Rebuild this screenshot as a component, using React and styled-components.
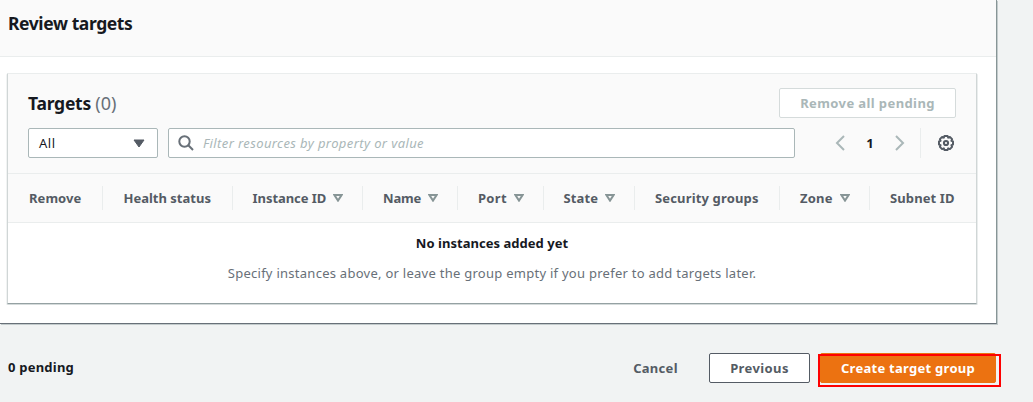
import React from "react";
import styled, { createGlobalStyle } from "styled-components";

const GlobalStyle = createGlobalStyle`
  * { box-sizing: border-box; }
  body {
    margin: 0;
    background: #f1f3f3;
    color: #16191f;
    font-family: "Noto Sans", "Open Sans", sans-serif;
    font-size: 13px;
    line-height: 20px;
    overflow: hidden;
  }
`;

const Page = styled.main`
  width: 1033px;
  height: 402px;
  display: flex;
  flex-direction: column;
`;

const Label = styled.span`
  white-space: nowrap;
  letter-spacing: ${(p) => p.$spacing || 0}px;
`;

const Container = styled.section`
  width: 997px;
  height: 324px;
  background: #fff;
  border-right: 1px solid #879596;
  border-bottom: 1px solid #687078;
  box-shadow: 1px 1px 0 #c3cbcc;
`;

const ContainerHeader = styled.header`
  height: 57px;
  padding: 11px 8px 0;
  background: #fafafa;
  border-bottom: 1px solid #eaeded;
`;

const Heading = styled.h2`
  margin: 0;
  font-size: 17.5px;
  font-weight: 700;
  line-height: 24px;
`;

const Count = styled.span`
  color: #687078;
  font-size: 18px;
  font-weight: 400;
  letter-spacing: 0;
`;

const Card = styled.section`
  width: 970px;
  height: 231px;
  margin: 16px 0 0 7px;
  background: #fff;
  border: 1px solid #d0d6d6;
  border-top-color: #eaeded;
  border-bottom-color: #95a1a3;
  border-radius: 1px;
  box-shadow: 0 1px 0 #d5dbdb, 1px 1px 0 #eaeded, -1px 1px 0 #f1f3f3;
`;

const CardHeader = styled.header`
  height: 100px;
  padding: 14px 20px 0;
  background: #fafafa;
  border-bottom: 1px solid #eaeded;
`;

const TitleRow = styled.div`
  display: flex;
  justify-content: space-between;
  align-items: center;
  height: 30px;
`;

const ToolRow = styled.div`
  display: flex;
  align-items: center;
  height: 30px;
  margin-top: 10px;
`;

const variants = {
  normal: { bg: "#fff", border: "#545b64", color: "#545b64" },
  disabled: { bg: "#fff", border: "#d5dbdb", color: "#aab7b8" },
  primary: { bg: "#ec7211", border: "#ec7211", color: "#fff" },
  link: { bg: "transparent", border: "transparent", color: "#545b64" },
};

const Button = styled.button`
  display: flex;
  align-items: center;
  justify-content: center;
  width: ${(p) => p.$width}px;
  height: 30px;
  padding: 0 0 1px;
  font: 700 13px/20px "Noto Sans", sans-serif;
  color: ${(p) => variants[p.$variant].color};
  background: ${(p) => variants[p.$variant].bg};
  border: 1px solid ${(p) => variants[p.$variant].border};
  border-radius: 2px;
`;

const Select = styled.div`
  display: flex;
  align-items: center;
  justify-content: space-between;
  width: 130px;
  height: 30px;
  padding: 0 12px 0 10px;
  background: #fff;
  border: 1px solid #aab7b8;
  border-radius: 2px;
`;

const SearchField = styled.div`
  display: flex;
  align-items: center;
  gap: 9px;
  width: 627px;
  height: 30px;
  margin-left: 10px;
  padding-left: 9px;
  background: #fff;
  border: 1px solid #aab7b8;
  border-radius: 2px;
  color: #aab7b8;
  font-style: italic;
`;

const Pagination = styled.nav`
  display: flex;
  align-items: center;
  justify-content: space-between;
  width: 70px;
  margin-left: 40px;
  font-weight: 700;
`;

const Preferences = styled.div`
  display: flex;
  align-items: center;
  justify-content: flex-end;
  width: 35px;
  height: 30px;
  margin-left: 15px;
  border-left: 1px solid #eaeded;
`;

const Columns = styled.div`
  display: flex;
  align-items: center;
  height: 49px;
  background: #fafafa;
  border-bottom: 1px solid #eaeded;
`;

const Column = styled.div`
  display: flex;
  align-items: center;
  gap: 7px;
  width: ${(p) => p.$width}px;
  height: 24px;
  padding-left: ${(p) => p.$pad || 20}px;
  flex: none;
  color: #545b64;
  font-weight: 700;
  border-right: ${(p) => (p.$last ? "none" : "1px solid #eaeded")};
`;

const Empty = styled.div`
  padding-top: 10px;
  text-align: center;
`;

const EmptyTitle = styled.div`
  font-weight: 700;
`;

const EmptyText = styled.div`
  margin-top: 10px;
  color: #687078;
`;

const Footer = styled.footer`
  display: flex;
  align-items: center;
  width: 996px;
  height: 30px;
  margin-top: 29px;
  padding-left: 8px;
`;

const Pending = styled.div`
  flex: 1;
  font-weight: 700;
  padding-bottom: 2px;
`;

const Actions = styled.div`
  display: flex;
  gap: 10px;
`;

const Highlighted = styled.div`
  position: relative;
`;

const HighlightFrame = styled.div`
  position: absolute;
  left: -2px;
  top: 1px;
  width: 183px;
  height: 33px;
  border: 2px solid #fe0000;
`;

const Chevron = ({ right }) => (
  <svg width="10" height="16" viewBox="0 0 10 16" fill="none" stroke="#aab7b8" strokeWidth="2">
    <path d={right ? "M1 1L8 8L1 15" : "M9 1L2 8L9 15"} />
  </svg>
);

const SearchIcon = () => (
  <svg width="16" height="16" viewBox="0 0 16 16" fill="none" stroke="#687078" strokeWidth="2">
    <circle cx="6.5" cy="6.5" r="5.2" />
    <path d="M10.3 10.3L15 15" />
  </svg>
);

const Caret = () => (
  <svg width="12" height="9" viewBox="0 0 12 9">
    <path d="M1 1H11L6 8Z" fill="#545b64" stroke="#545b64" strokeLinejoin="round" />
  </svg>
);

const SortIcon = () => (
  <svg width="10" height="8" viewBox="0 0 10 8">
    <path d="M1.4 1H8.6L5 6.6Z" fill="none" stroke="#879596" strokeWidth="2" />
  </svg>
);

const GearIcon = () => (
  <svg width="18" height="18" viewBox="0 0 18 18" fill="none" stroke="#545b64" strokeWidth="2">
    <path
      d="M7.4 2H10.6L11.2 3.6L12.9 2.9L15.1 5.1L14.4 6.8L16 7.4V10.6L14.4 11.2L15.1 12.9L12.9 15.1L11.2 14.4L10.6 16H7.4L6.8 14.4L5.1 15.1L2.9 12.9L3.6 11.2L2 10.6V7.4L3.6 6.8L2.9 5.1L5.1 2.9L6.8 3.6Z"
      strokeLinejoin="round"
    />
    <circle cx="9" cy="9" r="2.1" />
  </svg>
);

const columns = [
  { label: "Remove", width: 95, pad: 21, spacing: 0.05 },
  { label: "Health status", width: 130, pad: 20.5 },
  { label: "Instance ID", width: 130, sort: true, pad: 19.5, spacing: -0.05 },
  { label: "Name", width: 95, sort: true, spacing: -0.15 },
  { label: "Port", width: 86, sort: true, spacing: 0.3 },
  { label: "State", width: 91, sort: true, pad: 19.5, spacing: 0.1 },
  { label: "Security groups", width: 145, spacing: 0.15 },
  { label: "Zone", width: 90, sort: true, spacing: 0.2 },
  { label: "Subnet ID", width: 106, spacing: 0.1 },
];

export default function App() {
  return (
    <Page>
      <GlobalStyle />
      <Container>
        <ContainerHeader>
          <Heading><Label $spacing={-0.4}>Review targets</Label></Heading>
        </ContainerHeader>
        <Card>
          <CardHeader>
            <TitleRow>
              <Heading>
                <Label $spacing={-0.25}>Targets <Count>(0)</Count></Label>
              </Heading>
              <Button $variant="disabled" $width={177} disabled>
                <Label $spacing={0.4}>Remove all pending</Label>
              </Button>
            </TitleRow>
            <ToolRow>
              <Select><Label $spacing={0.5}>All</Label><Caret /></Select>
              <SearchField>
                <SearchIcon />
                <Label $spacing={0.39}>Filter resources by property or value</Label>
              </SearchField>
              <Pagination>
                <Chevron />
                <span>1</span>
                <Chevron right />
              </Pagination>
              <Preferences><GearIcon /></Preferences>
            </ToolRow>
          </CardHeader>
          <Columns>
            {columns.map((c, i) => (
              <Column key={c.label} $width={c.width} $pad={c.pad} $last={i === columns.length - 1}>
                <Label $spacing={c.spacing}>{c.label}</Label>
                {c.sort && <SortIcon />}
              </Column>
            ))}
          </Columns>
          <Empty>
            <EmptyTitle><Label $spacing={0.03}>No instances added yet</Label></EmptyTitle>
            <EmptyText>
              <Label $spacing={0.265}>Specify instances above, or leave the group empty if you prefer to add targets later.</Label>
            </EmptyText>
          </Empty>
        </Card>
      </Container>
      <Footer>
        <Pending><Label $spacing={0.22}>0 pending</Label></Pending>
        <Actions>
          <Button $variant="link" $width={87}><Label $spacing={0.3}>Cancel</Label></Button>
          <Button $variant="normal" $width={101}><Label $spacing={0.4}>Previous</Label></Button>
          <Highlighted>
            <Button $variant="primary" $width={176}><Label $spacing={0.27}>Create target group</Label></Button>
            <HighlightFrame />
          </Highlighted>
        </Actions>
      </Footer>
    </Page>
  );
}
